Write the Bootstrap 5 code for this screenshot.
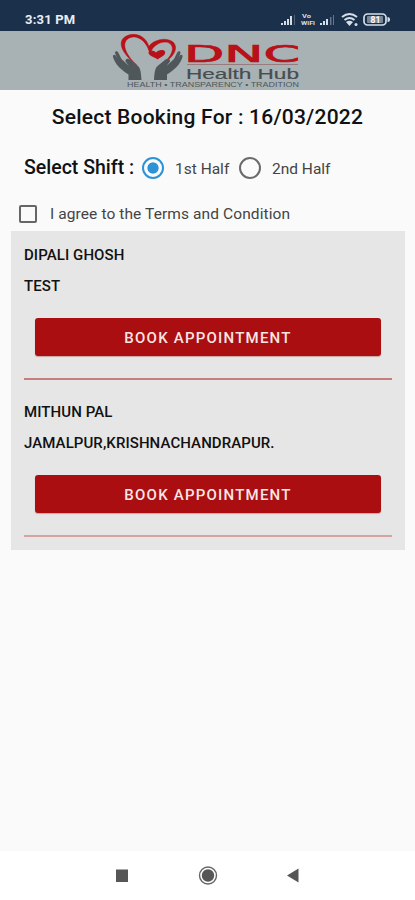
<!DOCTYPE html>
<html lang="en">
<head>
<meta charset="utf-8">
<meta name="viewport" content="width=device-width, initial-scale=1">
<title>DNC Health Hub</title>
<link href="https://cdn.jsdelivr.net/npm/bootstrap@5.3.0/dist/css/bootstrap.min.css" rel="stylesheet">
<style>
body{font-family:Roboto,"Liberation Sans",sans-serif;background:#fafafa;color:#111;height:900px;overflow:hidden}
.status-bar{height:31px;background:#1b304b;color:#e9eef5;padding:8px 24px 0 25px}
.clock{font-size:13px;line-height:24px;font-weight:700;letter-spacing:.2px}
.brand-bar{height:59px;background:#a8b2b4}
.page-title{font-size:21px;line-height:26px;font-weight:500;letter-spacing:.22px;margin-top:14px}
.shift-row{height:24px;margin-top:26px;padding-left:24px}
.shift-label{font-size:19.5px;font-weight:500;line-height:24px;letter-spacing:0;width:118px;white-space:nowrap;margin-top:-1px}
.opt{font-size:15.5px;color:#444;line-height:24px;white-space:nowrap;padding-top:2px}
.first-half{width:64px;margin-left:11px}
.second-half{margin-left:11px}
.form-check-input.pick{width:22px;height:22px;margin:0;border:2px solid #6a6a6a;background-color:#fafafa;flex:none}
.form-check-input.pick:checked{border-color:#2d93d8;background:radial-gradient(circle,#2d93d8 0 5.2px,#fafafa 6px)}
.form-check-input.box{width:18px;height:18px;margin:0;border:2px solid #666;border-radius:2px;background-color:#fafafa;flex:none}
.agree-row{height:24px;margin-top:22px;padding-left:19px}
.agree-row .opt{letter-spacing:.1px;margin-left:13px;padding-top:0}
.booking-list{margin:5px 10px 0 11px;background:#e6e6e6;height:319px;padding:13px 13px 0}
.booking{height:157px}
.who{font-size:15px;line-height:22px;font-weight:500;letter-spacing:.08px}
.place{margin-top:9px}
.btn.book{height:38px;margin:21px 11px 0 11px;padding:2px 0 0;background:#ab0e10;border:0;color:#f7e6e6;border-radius:3px;font-size:15px;font-weight:500;letter-spacing:1.22px;box-shadow:0 1px 1px #b9777799}
.rule{height:2px;flex:none;background:#c77d7e;margin-top:22px}
.rule.faint{background:#d3a5a1}
.nav-keys{height:49px;background:#fff}
</style>
<script src="https://cdn.jsdelivr.net/npm/bootstrap@5.3.0/dist/js/bootstrap.bundle.min.js"></script>
</head>
<body class="d-flex flex-column">
<div class="status-bar d-flex justify-content-between">
  <span class="clock">3:31 PM</span>
  <svg width="112" height="22" viewBox="280 8 112 22" fill="#d5dfe9">
    <path d="M282 25v-2h2v2zM285 25v-4h2v4zM288 25v-6h2v6zM291 25v-9h2v9z"/>
    <path d="M295 15h1v10h-1z" opacity=".3"/>
    <text x="303" y="17.800" font-size="5.500" font-weight="700" textLength="9" lengthAdjust="spacingAndGlyphs">Vo</text>
    <text x="302" y="24.800" font-size="5.800" font-weight="700" textLength="14" lengthAdjust="spacingAndGlyphs">WiFi</text>
    <path d="M321 25v-2h2v2zM324 25v-4h2v4zM327 25v-6h2v6z"/>
    <path d="M331 25v-8h1.500v8zM334 25v-10h1v10z" opacity=".4"/>
    <g fill="none" stroke="#d5dfe9" stroke-width="2"><path d="M343 17q7.500-6 15 0M345.500 20q5-4 10 0"/></g>
    <path d="M347 22q3.500-2.500 7 0l-3.500 4z"/><circle cx="357" cy="24.500" r="1.500"/>
    <rect x="365" y="14" width="22" height="11" rx="3.500" fill="none" stroke="#d5dfe9" stroke-width="1.700"/>
    <rect x="368" y="16" width="16" height="7" rx="1" opacity=".5"/><path d="M388.500 17q2.500 0 2.500 2.500t-2.500 2.500z"/>
    <text x="371.500" y="22.500" font-size="8.500" font-weight="700" fill="#fff" textLength="10">81</text>
  </svg>
</div>
<header class="brand-bar d-flex justify-content-center">
  <svg width="211" height="59" viewBox="102 31 211 59" role="img" aria-label="DNC Health Hub">
    <!-- open heart outline -->
    <path d="M137 65.500C125 56 117 45 123.500 38C132 30.500 146 35 148.800 46.500C153 40 166 36.500 173 42C179 48 174 57 162.500 64C172 56 175 48 170 43.500C164 39.500 153 44 149.800 54C147 39 134 33 127 39.500C121 46 128 57 137 65.500Z" fill="#b91119" stroke="#b91119" stroke-width=".5"/>
    <path d="M158 59.500C155 57.500 148.500 56 148.500 52.500C149.500 49.500 154 50 156 52.500C158 50 163 49 165 51.500C166.500 55.500 160 57 158 59.500Z" fill="#b91119"/>
    <!-- cupped hands -->
    <g id="hand" fill="#50575a">
      <path d="M128.500 80V74.500C121 70 115 64 113 57C112.500 54.500 115 54 116 56L117.500 59L115 53C115 50.500 117.500 50.500 118.500 53L121.500 59L129 66L125.500 61.500C125 58.500 128 58 130 59.500L138 66C140.500 68.500 141 72 141.500 80Z"/>
    </g>
    <use href="#hand" transform="translate(295.500 0) scale(-1 1)"/>
    <g font-family="Liberation Sans,sans-serif">
      <text x="184" y="62" font-size="23" font-family="DejaVu Sans,sans-serif" fill="#b91119" stroke="#b91119" stroke-width=".7" textLength="116" lengthAdjust="spacingAndGlyphs">DNC</text>
      <path d="M187 64.500h111" stroke="#8d5658" stroke-width=".6"/>
      <text x="186" y="79" font-size="15" fill="#474d50" stroke="#474d50" stroke-width=".2" textLength="113" lengthAdjust="spacingAndGlyphs">Health Hub</text>
      <text x="127" y="86.800" font-size="6.300" fill="#50575a" textLength="172" lengthAdjust="spacingAndGlyphs">HEALTH • TRANSPARENCY • TRADITION</text>
    </g>
  </svg>
</header>
<main class="flex-grow-1">
  <h1 class="page-title text-center mb-0">Select Booking For : 16/03/2022</h1>
  <div class="shift-row d-flex align-items-center">
    <span class="shift-label">Select Shift :</span>
    <input class="form-check-input pick" type="radio" name="shift" id="s1" checked>
    <label class="opt first-half" for="s1">1st Half</label>
    <input class="form-check-input pick" type="radio" name="shift" id="s2">
    <label class="opt second-half" for="s2">2nd Half</label>
  </div>
  <div class="agree-row d-flex align-items-center">
    <input class="form-check-input box" type="checkbox" id="agree">
    <label class="opt" for="agree">I agree to the Terms and Condition</label>
  </div>
  <section class="booking-list">
    <article class="booking d-flex flex-column">
      <div class="who">DIPALI GHOSH</div>
      <div class="who place">TEST</div>
      <button class="btn book" type="button">BOOK APPOINTMENT</button>
      <div class="rule"></div>
    </article>
    <article class="booking d-flex flex-column">
      <div class="who">MITHUN PAL</div>
      <div class="who place">JAMALPUR,KRISHNACHANDRAPUR.</div>
      <button class="btn book" type="button">BOOK APPOINTMENT</button>
      <div class="rule faint"></div>
    </article>
  </section>
</main>
<nav class="nav-keys d-flex justify-content-center">
  <svg width="200" height="49" viewBox="108 851 200 49" fill="#565656">
    <rect x="116" y="869.500" width="12" height="12.500"/>
    <circle cx="208" cy="875.500" r="8.500" fill="none" stroke="#666" stroke-width="1.400"/><circle cx="208" cy="875.500" r="6.200"/>
    <path d="M287 875.500l11.500-7v14z"/>
  </svg>
</nav>
</body>
</html>
